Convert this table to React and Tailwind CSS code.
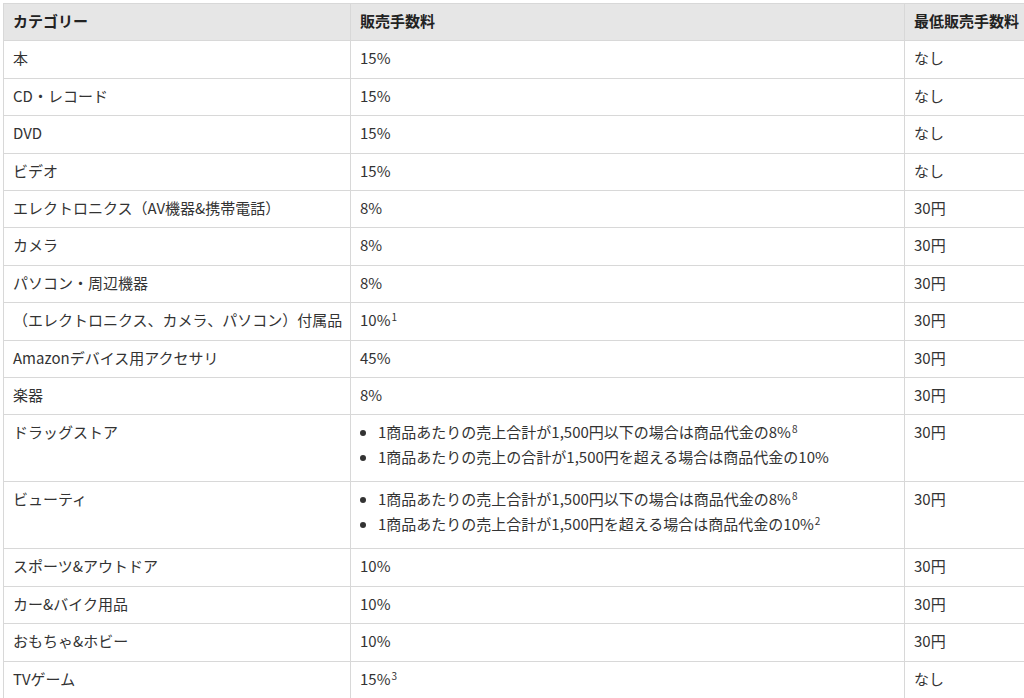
import React from 'react';

const rows = [
  { cat: '本', fee: '15%', min: 'なし' },
  { cat: 'CD・レコード', fee: '15%', min: 'なし' },
  { cat: 'DVD', fee: '15%', min: 'なし' },
  { cat: 'ビデオ', fee: '15%', min: 'なし' },
  { cat: 'エレクトロニクス（AV機器&携帯電話）', fee: '8%', min: '30円' },
  { cat: 'カメラ', fee: '8%', min: '30円' },
  { cat: 'パソコン・周辺機器', fee: '8%', min: '30円' },
  { cat: '（エレクトロニクス、カメラ、パソコン）付属品', fee: '10%', sup: '1', min: '30円' },
  { cat: 'Amazonデバイス用アクセサリ', fee: '45%', min: '30円' },
  { cat: '楽器', fee: '8%', min: '30円' },
  {
    cat: 'ドラッグストア',
    list: [
      { t: '1商品あたりの売上合計が1,500円以下の場合は商品代金の8%', sup: '8' },
      { t: '1商品あたりの売上の合計が1,500円を超える場合は商品代金の10%' },
    ],
    min: '30円',
  },
  {
    cat: 'ビューティ',
    list: [
      { t: '1商品あたりの売上合計が1,500円以下の場合は商品代金の8%', sup: '8' },
      { t: '1商品あたりの売上合計が1,500円を超える場合は商品代金の10%', sup: '2' },
    ],
    min: '30円',
  },
  { cat: 'スポーツ&アウトドア', fee: '10%', min: '30円' },
  { cat: 'カー&バイク用品', fee: '10%', min: '30円' },
  { cat: 'おもちゃ&ホビー', fee: '10%', min: '30円' },
  { cat: 'TVゲーム', fee: '15%', sup: '3', min: 'なし' },
];

const Sup = ({ children }) => (
  <sup className="text-[10px] ml-[1px]">{children}</sup>
);

const cell = 'border border-[#d8d8d8] px-[9px] pt-[7px] pb-[9px] align-top leading-[20.4px]';

export default function App() {
  return (
    <div
      className="w-[1024px] h-[698px] overflow-hidden bg-white text-[#333] text-[15px] pl-[3px] pt-[3px]"
      style={{ fontFamily: '"Noto Sans CJK JP", "Noto Sans", sans-serif' }}
    >
      <table className="table-fixed border-collapse w-[1040px]">
        <colgroup>
          <col className="w-[347px]" />
          <col className="w-[554px]" />
          <col />
        </colgroup>
        <thead>
          <tr className="bg-[#e6e6e6]">
            <th className={`${cell} text-left font-bold text-[#222]`}>カテゴリー</th>
            <th className={`${cell} text-left font-bold text-[#222]`}>販売手数料</th>
            <th className={`${cell} text-left font-bold text-[#222] whitespace-nowrap`}>最低販売手数料</th>
          </tr>
        </thead>
        <tbody>
          {rows.map((r) => (
            <tr key={r.cat}>
              <td className={`${cell} whitespace-nowrap`}>{r.cat}</td>
              <td className={cell}>
                {r.list ? (
                  <ul className="list-disc pl-[18px]">
                    {r.list.map((li) => (
                      <li key={li.t} className="mb-[4.6px]">
                        {li.t}
                        {li.sup && <Sup>{li.sup}</Sup>}
                      </li>
                    ))}
                  </ul>
                ) : (
                  <>
                    {r.fee}
                    {r.sup && <Sup>{r.sup}</Sup>}
                  </>
                )}
              </td>
              <td className={cell}>{r.min}</td>
            </tr>
          ))}
        </tbody>
      </table>
    </div>
  );
}
